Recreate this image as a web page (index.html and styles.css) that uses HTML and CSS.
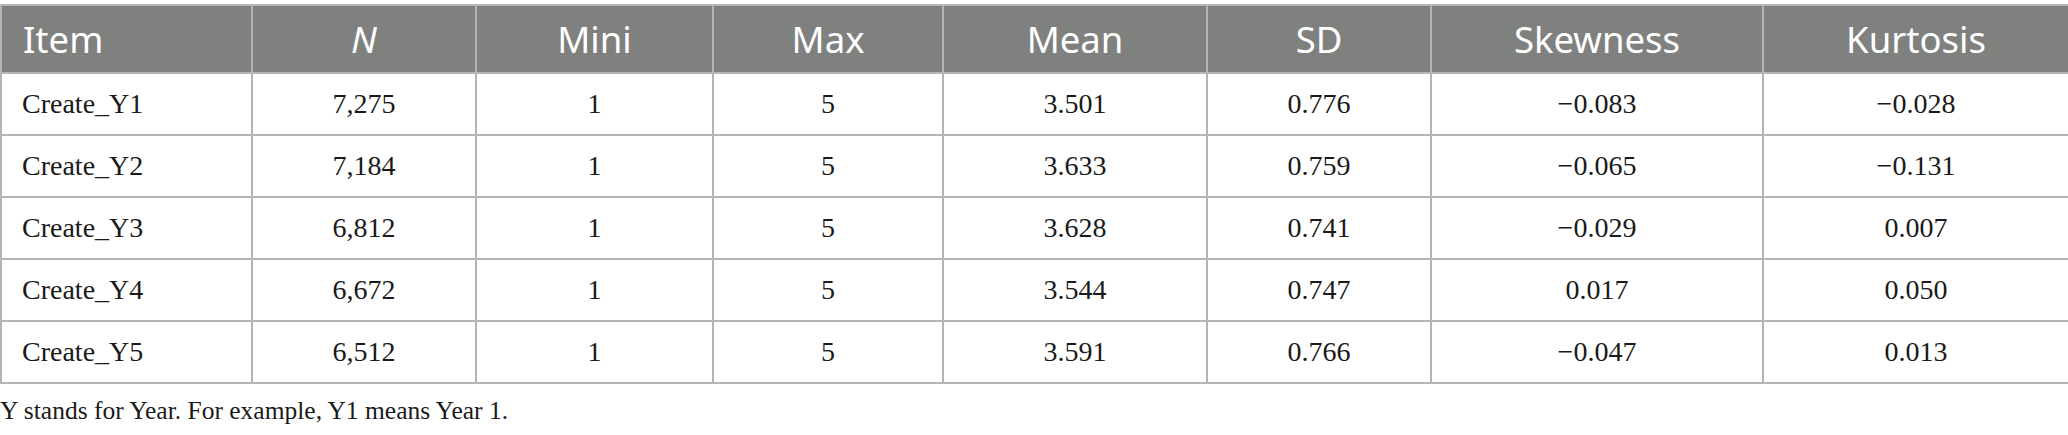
FILE: index.html
```html
<!DOCTYPE html>
<html lang="en">
<head>
<meta charset="utf-8">
<link rel="stylesheet" href="styles.css">
<title>Table</title>
</head>
<body>
<div class="wrap">
<table class="stats">
<colgroup>
<col class="c1"><col class="c2"><col class="c3"><col class="c4"><col class="c5"><col class="c6"><col class="c7"><col class="c8">
</colgroup>
<thead>
<tr><th class="first">Item</th><th><i>N</i></th><th>Mini</th><th>Max</th><th>Mean</th><th>SD</th><th>Skewness</th><th>Kurtosis</th></tr>
</thead>
<tbody>
<tr><td class="first">Create_Y1</td><td>7,275</td><td>1</td><td>5</td><td>3.501</td><td>0.776</td><td>−0.083</td><td>−0.028</td></tr>
<tr><td class="first">Create_Y2</td><td>7,184</td><td>1</td><td>5</td><td>3.633</td><td>0.759</td><td>−0.065</td><td>−0.131</td></tr>
<tr><td class="first">Create_Y3</td><td>6,812</td><td>1</td><td>5</td><td>3.628</td><td>0.741</td><td>−0.029</td><td>0.007</td></tr>
<tr><td class="first">Create_Y4</td><td>6,672</td><td>1</td><td>5</td><td>3.544</td><td>0.747</td><td>0.017</td><td>0.050</td></tr>
<tr><td class="first">Create_Y5</td><td>6,512</td><td>1</td><td>5</td><td>3.591</td><td>0.766</td><td>−0.047</td><td>0.013</td></tr>
</tbody>
</table>
<p class="note">Y stands for Year. For example, Y1 means Year 1.</p>
</div>
</body>
</html>
```
FILE: styles.css
```css
html, body {
  margin: 0;
  padding: 0;
  background: #ffffff;
}
.wrap {
  padding-top: 4px;
  width: 2068px;
}
.stats {
  width: 2068px;
  table-layout: fixed;
  border-collapse: collapse;
  font-family: "Liberation Serif", "Times New Roman", serif;
  color: #1a1a1a;
}
.c1 { width: 251px; }
.c2 { width: 224px; }
.c3 { width: 237px; }
.c4 { width: 230px; }
.c5 { width: 264px; }
.c6 { width: 224px; }
.c7 { width: 332px; }
.c8 { width: 306px; }
.stats th, .stats td {
  border: 2px solid #b4b4b4;
  text-align: center;
  padding: 0 10px;
}
.stats th {
  background: #7f817f;
  color: #ffffff;
  font-family: "Noto Sans", "Open Sans", sans-serif;
  font-weight: 400;
  font-size: 36.5px;
  height: 66px;
}
.stats td {
  font-size: 28px;
  height: 60px;
}
.stats th.first {
  text-align: left;
  padding-left: 21px;
}
.stats td.first {
  text-align: left;
  padding-left: 20px;
}
.note {
  margin: 0;
  padding-top: 12px;
  font-family: "Liberation Serif", "Times New Roman", serif;
  font-size: 25.5px;
  line-height: 30px;
  color: #1a1a1a;
}
```
